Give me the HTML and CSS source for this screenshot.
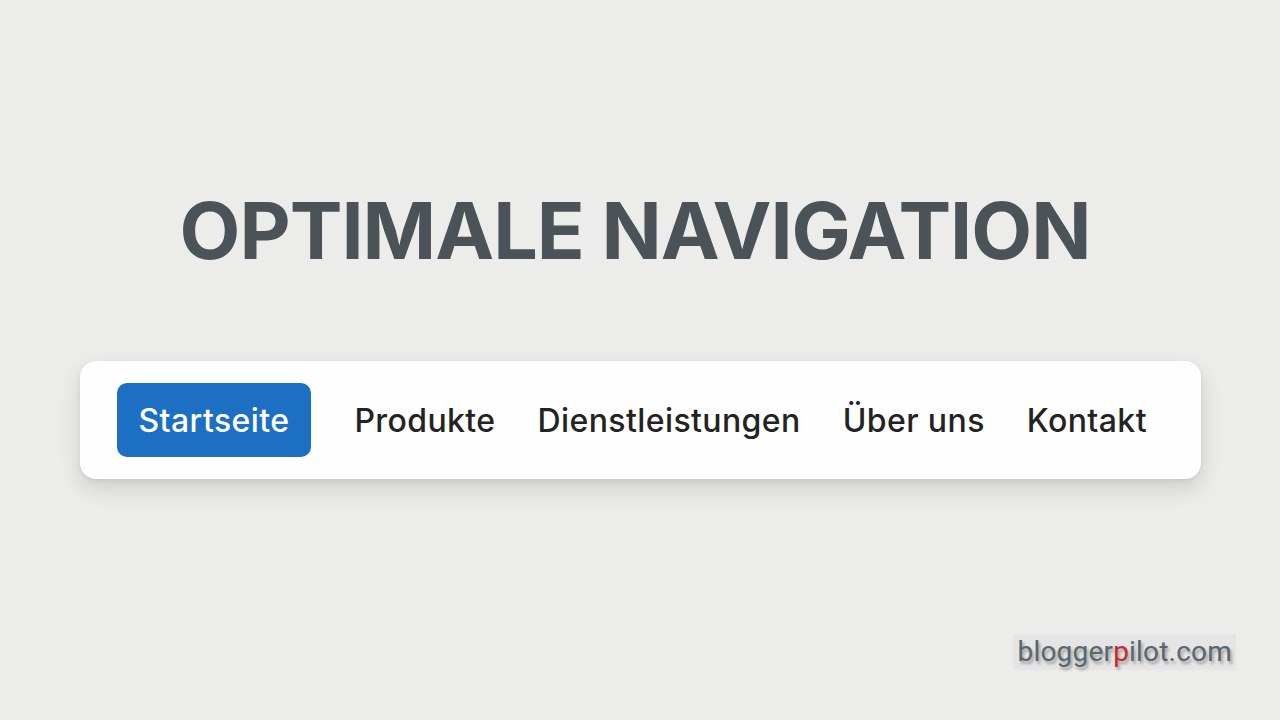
FILE: index.html
```html
<!DOCTYPE html>
<html lang="de">
<head>
<meta charset="utf-8">
<title>Optimale Navigation</title>
<link rel="stylesheet" href="styles.css">
</head>
<body>
<main class="stage">
  <h1 class="title">OPTIMALE NAVIGATION</h1>
  <nav class="navbar">
    <a class="nav-item active" href="#">Startseite</a>
    <a class="nav-item" href="#">Produkte</a>
    <a class="nav-item" href="#">Dienstleistungen</a>
    <a class="nav-item" href="#">Über uns</a>
    <a class="nav-item" href="#">Kontakt</a>
  </nav>
</main>
<div class="watermark">blogger<span class="wm-red">p</span>ilot.com</div>
</body>
</html>
```
FILE: styles.css
```css
* { box-sizing: border-box; }
html, body {
  margin: 0;
  padding: 0;
  width: 1280px;
  height: 720px;
  overflow: hidden;
  background: #ececeb;
  font-family: Inter, "Noto Sans", sans-serif;
}
.stage {
  display: flex;
  flex-direction: column;
  align-items: center;
  padding-top: 183px;
}
.title {
  margin: 0;
  font-size: 79px;
  line-height: 94px;
  font-weight: 700;
  letter-spacing: -1px;
  color: #4b5258;
  margin-left: -10px;
}
.navbar {
  margin-top: 84px;
  width: 1121px;
  height: 118px;
  background: #fefefe;
  border-radius: 16px;
  box-shadow: 0 10px 22px rgba(0,0,0,0.13), 0 2px 5px rgba(0,0,0,0.06);
  display: flex;
  align-items: center;
  padding-left: 37px;
}
.nav-item {
  display: flex;
  align-items: center;
  height: 74px;
  padding: 0 21px;
  font-size: 32px;
  font-weight: 500;
  color: #232323;
  text-decoration: none;
  letter-spacing: 0.4px;
}
.nav-item.active {
  background: #1c6fc3;
  color: #ffffff;
  border-radius: 10px;
  padding: 0 22px;
  margin-right: 22px;
}
.nav-item.wide { padding-right: 25px; }
.watermark {
  position: absolute;
  right: 44px;
  bottom: 50px;
  padding: 2px 4px;
  background: rgba(225,225,225,0.6);
  font-family: Roboto, "Liberation Sans", sans-serif;
  font-size: 28px;
  line-height: 32px;
  color: #586670;
  text-shadow: 2px 3px 3px rgba(0,0,0,0.3);
  letter-spacing: 0.2px;
}
.wm-red { color: #c8272b; }
```
